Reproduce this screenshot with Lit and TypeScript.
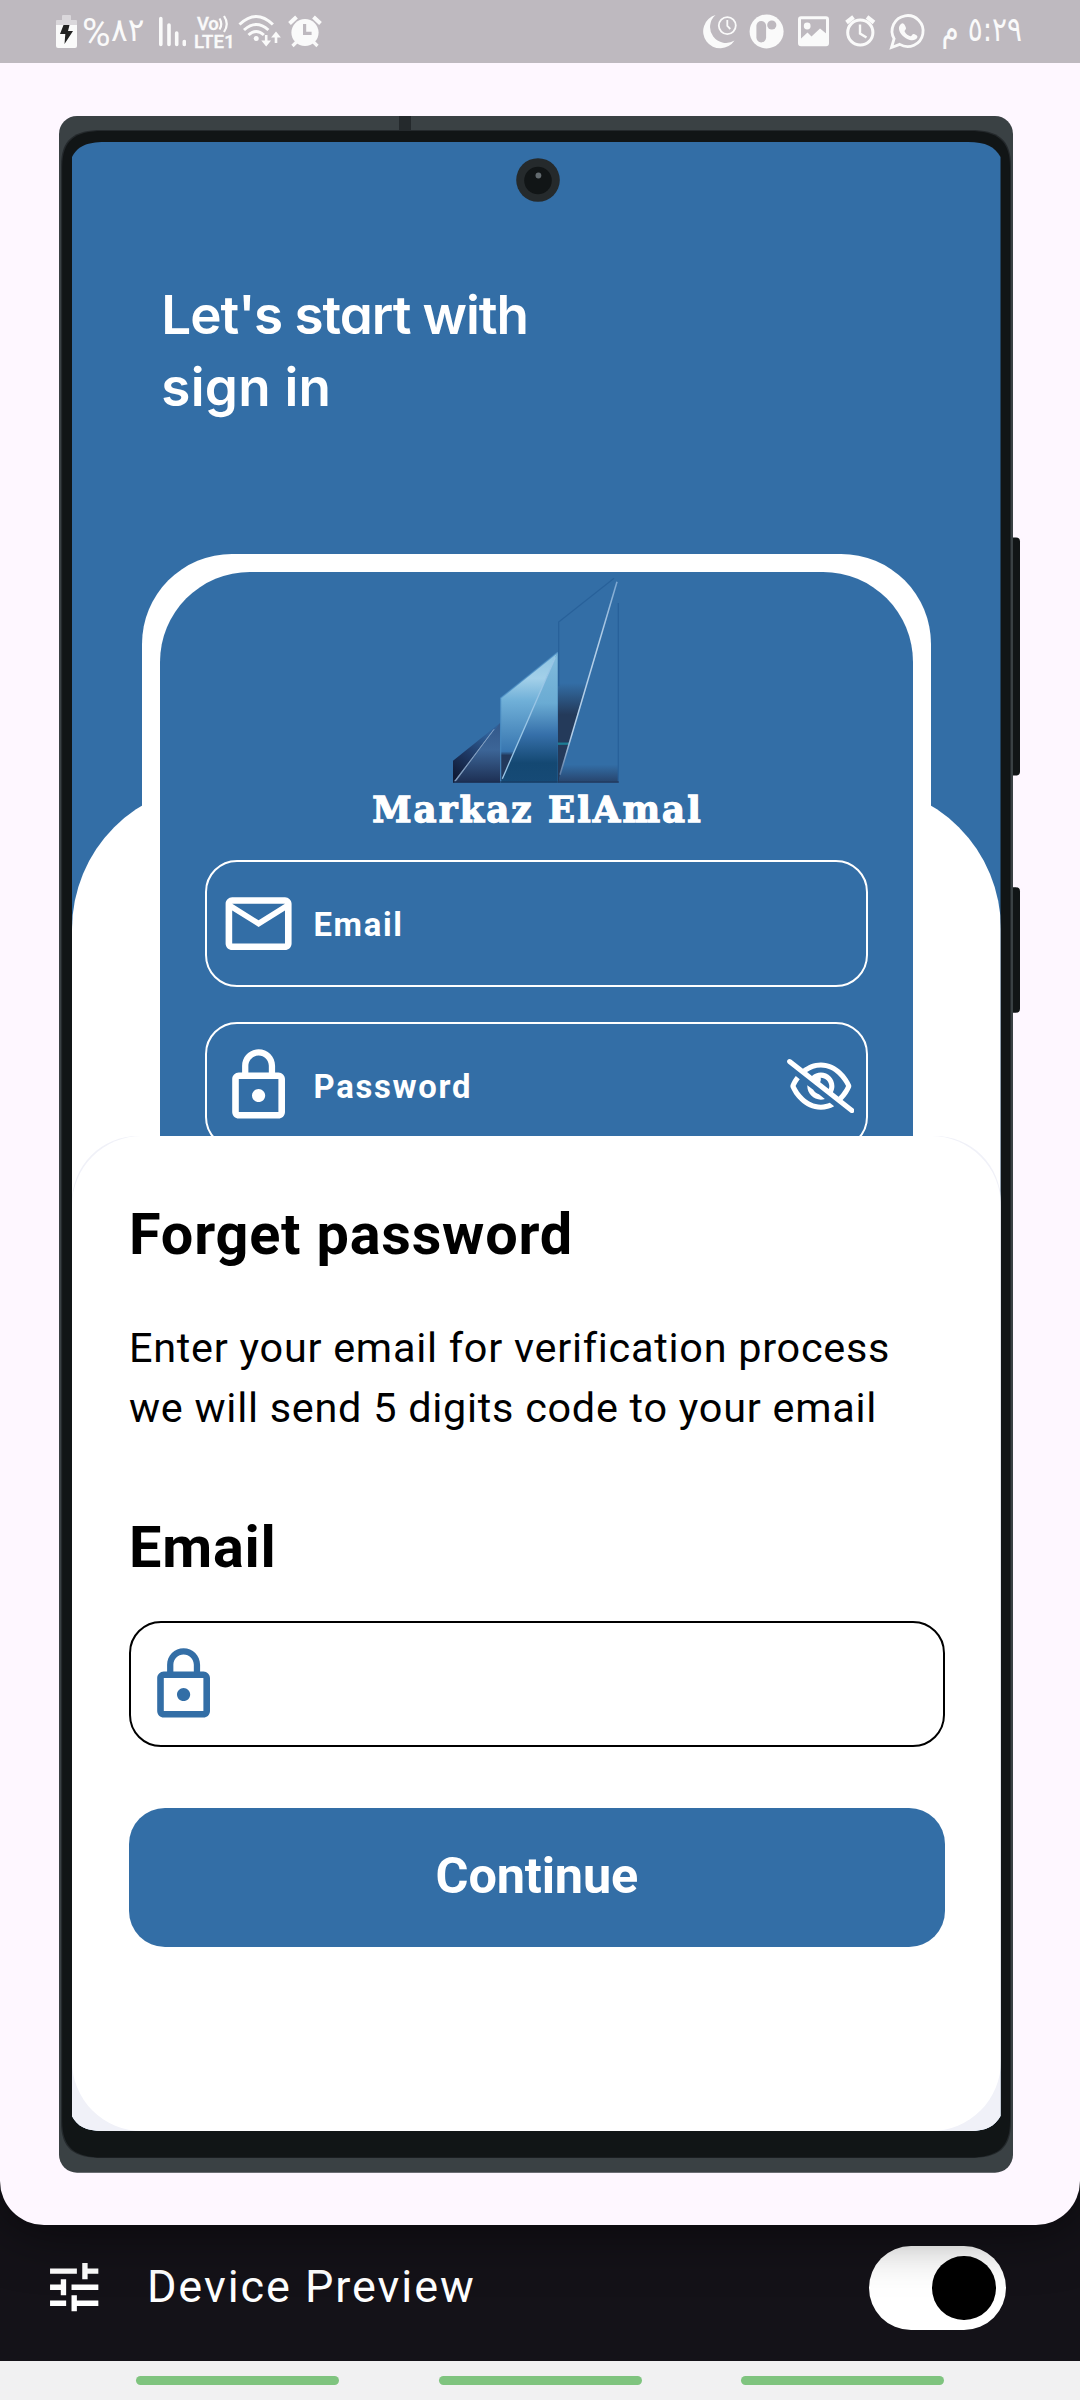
import { LitElement, html, css, svg } from "lit";
import { customElement, property } from "lit/decorators.js";

const LOCK =
  "M12 17c1.1 0 2-.9 2-2s-.9-2-2-2-2 .9-2 2 .9 2 2 2zm6-9h-1V6c0-2.76-2.24-5-5-5S7 3.24 7 6v2H6c-1.1 0-2 .9-2 2v10c0 1.1.9 2 2 2h12c1.1 0 2-.9 2-2V10c0-1.1-.9-2-2-2zM8.9 6c0-1.71 1.39-3.1 3.1-3.1s3.1 1.39 3.1 3.1v2H8.9V6zM18 20H6V10h12v10z";
const MAIL =
  "M22 6c0-1.1-.9-2-2-2H4c-1.1 0-2 .9-2 2v12c0 1.1.9 2 2 2h16c1.1 0 2-.9 2-2V6zm-2 0l-8 5-8-5h16zm0 12H4V8l8 5 8-5v10z";
const TUNE =
  "M3 17v2h6v-2H3zM3 5v2h10V5H3zm10 16v-2h8v-2h-8v-2h-2v6h2zM7 9v2H3v2h4v2h2V9H7zm14 4v-2H11v2h10zm-6-4h2V7h4V5h-4V3h-2v6z";
const EYE_OFF =
  "M38.8 5.1C28.4-3.1 13.3-1.2 5.1 9.2S-1.2 34.7 9.2 42.9l592 464c10.4 8.2 25.5 6.3 33.7-4.1s6.3-25.5-4.1-33.7L525.6 386.7c39.6-40.6 66.4-86.1 79.9-118.4c3.3-7.9 3.3-16.7 0-24.6c-14.9-35.7-46.2-87.7-93-131.1C465.5 68.8 400.8 32 320 32c-68.2 0-125 26.3-169.3 60.8L38.8 5.1zm151 118.3C226 97.7 269.5 80 320 80c65.2 0 118.8 29.6 159.9 67.7C518.4 183.5 545 226 558.6 256c-12.6 28-36.6 66.8-70.9 100.9l-53.8-42.2c9.1-17.6 14.2-37.5 14.2-58.7c0-70.7-57.3-128-128-128c-32.2 0-61.7 11.9-84.2 31.5l-46.1-36.1zM394.9 284.2l-81.5-63.9c4.2-8.5 6.6-18.2 6.6-28.3c0-5.5-.7-10.9-2-16c.7 0 1.3 0 2 0c44.2 0 80 35.8 80 80c0 9.9-1.8 19.4-5.1 28.2zm9.4 130.3C378.8 425.4 350.7 432 320 432c-65.2 0-118.8-29.6-159.9-67.7C121.6 328.5 95 286 81.4 256c8.3-18.4 21.5-41.5 39.4-64.8L83.1 161.5C60.3 191.2 44 220.8 34.5 243.7c-3.3 7.9-3.3 16.7 0 24.6c14.9 35.7 46.2 87.7 93 131.1C174.5 443.2 239.2 480 320 480c47.8 0 89.9-12.9 126.2-32.5l-41.9-33zM192 256c0 70.7 57.3 128 128 128c13.3 0 26.1-2 38.2-5.8L302 334c-23.5-5.4-43.1-21.2-53.7-42.3l-56.1-44.2c-.2 2.8-.3 5.6-.3 8.5z";

@customElement("glyph-icon")
export class GlyphIcon extends LitElement {
  @property() path = "";
  @property() box = "0 0 24 24";
  static styles = css`
    :host { display: block; flex: none; }
    svg { display: block; width: 100%; height: 100%; fill: currentColor; }
  `;
  render() {
    return html`<svg viewBox=${this.box}><path d=${this.path}></path></svg>`;
  }
}

@customElement("status-bar")
export class StatusBar extends LitElement {
  static styles = css`
    :host { display: flex; justify-content: space-between; height: 63px; background: #beb9bf; color: #fafafa; }
    .side { display: flex; height: 63px; }
    .left { padding-left: 56px; }
    .right { padding-right: 58px; }
    svg { display: block; height: 63px; flex: none; }
    .battery { width: 21px; }
    .signal { width: 28px; margin-left: 13px; }
    .percent { width: 63px; margin-left: 5px; font: 32px/63px "DejaVu Sans", sans-serif; display: flex; direction: ltr; }
    .sign { font: 39px/67px "Roboto", sans-serif; width: 29px; }
    .digits { display: block; transform: scaleX(0.97); transform-origin: 0 50%; line-height: 60px; }
    .volte { margin-left: 8px; width: 39px; padding-top: 15px; font: 500 18.5px/18px "Roboto", sans-serif; display: flex; flex-direction: column; -webkit-text-stroke: 0.4px #fafafa; }
    .vo { display: flex; padding-left: 3px; height: 18px; letter-spacing: -0.3px; }
    .vo svg { width: 12px; height: 18px; }
    .lte { letter-spacing: 0.3px; }
    .wifi { width: 43px; margin-left: 5px; }
    .alarm { width: 34px; margin-left: 7px; }
    .apps { width: 224px; }
    .time { margin-left: 12px; direction: rtl; font: 34px/58px "DejaVu Sans", sans-serif; white-space: nowrap; width: 84px; transform: scaleX(0.82); transform-origin: 100% 50%; }
  `;
  render() {
    return html`
      <div class="side left">
        <svg class="battery" viewBox="56 0 21 63">
          <path fill="#dad7db" d="M62 16q0-1 1-1h7q1 0 1 1v4h5q1 0 1 1v5H56v-5q0-1 1-1h5z" />
          <path fill="#fafafa" d="M56 25h21v21q0 2-2 2H58q-2 0-2-2z" />
          <path fill="#222" d="M63.500 25h6l-1.500 6h5l-8.500 13 .8-10H60z" />
        </svg>
        <div class="percent"><span class="sign">%</span><span class="digits">٨٢</span></div>
        <svg class="signal" viewBox="157 0 28 63" fill="none" stroke="#fafafa" stroke-width="3.600" stroke-linecap="round">
          <path d="M159.800 18.500V44.500M168 25V44.500M175.700 33V44.500M183.300 41.500V44.500" />
        </svg>
        <div class="volte">
          <span class="vo">Vo<svg viewBox="0 0 12 18" fill="none" stroke="#fafafa" stroke-width="2.200"><path d="M1.500 3.500q3.500 5.500 0 11M6 1q5.500 8 0 16" /></svg></span>
          <span class="lte">LTE1</span>
        </div>
        <svg class="wifi" viewBox="237 0 43 63" fill="none" stroke="#fafafa" stroke-width="3">
          <path d="M238.500 24.500q16.700-16 33.400 0M243 30q12.200-11 24.400 0M247.500 35q7.700-7 15.400 0" />
          <circle cx="255.200" cy="38.500" r="2.500" fill="#fafafa" stroke="none" />
          <path stroke-width="2.600" d="M265.200 35v8M275 43v-8" />
          <path fill="#fafafa" stroke="none" d="M260.300 40.500h9.800l-4.900 6zM270.100 37.500h9.800l-4.900-6z" />
        </svg>
        <svg class="alarm" viewBox="288 0 34 63">
          <circle cx="305" cy="32.500" r="13.600" fill="#fafafa" />
          <path d="M289.500 23.500l7-6.500M320.500 23.500l-7-6.500" stroke="#fafafa" stroke-width="4" />
          <path d="M292.500 46l4.500-4.500M317.500 46l-4.500-4.500" stroke="#fafafa" stroke-width="3.200" />
          <path d="M304.600 24v9.300h7" fill="none" stroke="#beb9bf" stroke-width="3.200" />
        </svg>
      </div>
      <div class="side right">
        <svg class="apps" viewBox="702 0 224 63">
          <g fill="#fafafa">
            <path d="M715.500 15A17 17 0 1 0 734.500 40.500A15.950 15.950 0 0 1 715.500 15z" />
            <circle cx="727.300" cy="25.600" r="8.500" fill="none" stroke="#fafafa" stroke-width="1.800" />
            <path d="M727.300 20v6l3 3" fill="none" stroke="#fafafa" stroke-width="1.800" />
            <circle cx="766.600" cy="31.400" r="17" />
            <rect x="756.400" y="21" width="9.700" height="21.400" rx="4.800" fill="#beb9bf" />
            <circle cx="771.800" cy="25" r="4.600" fill="#beb9bf" />
            <rect x="799.500" y="17.700" width="28" height="27" rx="1.500" fill="none" stroke="#fafafa" stroke-width="3" />
            <circle cx="807.200" cy="26" r="3.400" />
            <path d="M800 39.500l7.500-7 4 4 8.500-8 8 6.500v9.500h-28z" />
            <circle cx="860.300" cy="32.500" r="12.600" fill="none" stroke="#fafafa" stroke-width="3" />
            <path d="M846.500 22.500l7-5.500M874 22.500l-7-5.500" stroke="#fafafa" stroke-width="4.200" />
            <path d="M860 24.500v9l6.500 4" fill="none" stroke="#fafafa" stroke-width="2.400" />
            <path d="M891.500 47.500l2.600-8.800a15.500 15.500 0 1 1 5.600 5.700z" fill="none" stroke="#fafafa" stroke-width="2.800" />
            <path d="M901 24c2.500-2 4 1 5 4 .4 1.500-2 2.500-1.300 3.700 1.600 2.600 3.300 3.800 5.600 4.500 1.200.3 2-2.700 3.700-2.200 2.400.9 4 1.800 3.300 3.600-1.200 2.600-4.500 3.300-7.500 2.400-5.500-1.800-10-6-10.800-10.700-.4-2.200.6-4.200 2-5.300z" />
          </g>
        </svg>
        <span class="time">٥:٢٩ م</span>
      </div>
    `;
  }
}

@customElement("brand-logo")
export class BrandLogo extends LitElement {
  static styles = css`
    :host { display: flex; flex-direction: column; align-items: center; }
    svg { display: block; width: 166px; height: 204.7px; margin-right: 1px; }
    .name { margin-top: 7px; padding-left: 2px; font: bold 35.5px/40px "DejaVu Serif", serif; letter-spacing: 2.1px; color: #fff; white-space: nowrap; -webkit-text-stroke: 1.3px #fff; }
  `;
  render() {
    return html`
      <svg viewBox="339 55 498 614">
        <defs>
          <linearGradient id="a" gradientUnits="userSpaceOnUse" x1="345" y1="650" x2="440" y2="520"><stop offset="0" stop-color="#101b36" /><stop offset=".5" stop-color="#1f3a66" /><stop offset="1" stop-color="#30619a" /></linearGradient>
          <linearGradient id="b" gradientUnits="userSpaceOnUse" x1="0" y1="490" x2="0" y2="669"><stop offset="0" stop-color="#33588a" /><stop offset=".45" stop-color="#3c6597" /><stop offset="1" stop-color="#1d2f53" /></linearGradient>
          <linearGradient id="c" gradientUnits="userSpaceOnUse" x1="0" y1="278" x2="0" y2="669"><stop offset="0" stop-color="#8cc3e2" /><stop offset=".2" stop-color="#a3d0e9" /><stop offset=".37" stop-color="#70b0d8" /><stop offset=".76" stop-color="#3876b0" /><stop offset=".79" stop-color="#22395c" /><stop offset="1" stop-color="#22395c" /></linearGradient>
          <linearGradient id="d" gradientUnits="userSpaceOnUse" x1="0" y1="278" x2="0" y2="669"><stop offset="0" stop-color="#82bcdd" /><stop offset=".39" stop-color="#6aabd3" /><stop offset=".63" stop-color="#3670aa" /><stop offset=".85" stop-color="#144872" /><stop offset="1" stop-color="#164a76" /></linearGradient>
          <linearGradient id="e" gradientUnits="userSpaceOnUse" x1="0" y1="370" x2="0" y2="465"><stop offset="0" stop-color="#243a5a" stop-opacity="0" /><stop offset="1" stop-color="#243a5a" /></linearGradient>
          <linearGradient id="f" gradientUnits="userSpaceOnUse" x1="0" y1="615" x2="0" y2="669"><stop offset="0" stop-color="#27436b" stop-opacity="0" /><stop offset="1" stop-color="#27436b" /></linearGradient>
          <linearGradient id="g" gradientUnits="userSpaceOnUse" x1="832" y1="62" x2="660" y2="645"><stop offset="0" stop-color="#7ba6d0" /><stop offset=".3" stop-color="#b4cfe8" /><stop offset=".8" stop-color="#b4cfe8" /><stop offset="1" stop-color="#5c7ba3" /></linearGradient>
        </defs>
        <path fill="url(#a)" d="M339 603L480 490L342 669H339z" />
        <path fill="url(#b)" d="M480 490V669H340z" />
        <path fill="#8ba6c6" d="M344 664L462 509L348 663z" stroke="#8ba6c6" stroke-width="2" />
        <path fill="url(#c)" d="M482 415L653 278L482 669z" />
        <path fill="url(#d)" d="M653 278V669H482z" />
        <path d="M482 665V415L653 278" fill="none" stroke="#4c8fc4" stroke-width="4" opacity=".7" />
        <path d="M487 657L646 293" stroke="#9ac6e6" stroke-width="4" />
        <path fill="url(#e)" d="M654 370H740L660 645L656 669H654z" />
        <path fill="url(#f)" d="M668 615H836V669H655z" />
        <path d="M656 380V187L822 56M835 130V665" fill="none" stroke="#28619a" stroke-width="4" />
        <path d="M654 552H687" stroke="#1d7c93" stroke-width="7" />
        <path d="M831 66L660 645" stroke="url(#g)" stroke-width="4.500" />
        <path d="M339 667H836" stroke="#1b2c4c" stroke-width="3" opacity=".6" />
      </svg>
      <div class="name">Markaz ElAmal</div>
    `;
  }
}

@customElement("login-page")
export class LoginPage extends LitElement {
  static styles = css`
    :host { display: block; height: 1989px; position: relative; background: #336ea6; color: #fff; overflow: hidden; }
    .backdrop { position: absolute; left: 0; right: 0; top: 643px; bottom: 0; background: #fff; border-radius: 144px 144px 0 0; }
    .page { position: relative; padding: 138px 69.8px 0; }
    .title { margin: 0 0 130.4px 19.5px; font: 600 53px/71.7px "Inter", "Lato", sans-serif; font-feature-settings: "cv11"; letter-spacing: -1.05px; }
    .wide { letter-spacing: 0.25px; }
    .frame { padding: 18.3px 18px 0; background: #fff; border-radius: 90px 90px 0 0; }
    .card { height: 700px; padding: 6px 44.800px 0 45.300px; background: #336ea6; border-radius: 90px 90px 0 0; }
    .fields { display: flex; flex-direction: column; gap: 35.6px; margin-top: 30.4px; }
    .field { box-sizing: border-box; display: flex; align-items: center; height: 126.7px; padding: 0 11.5px 0 12.4px; border: 2px solid #fff; border-radius: 32px; }
    .icon { width: 79.2px; height: 79.2px; }
    .label { flex: 1; margin: 2.6px 0 0 14.8px; font: bold 32.8px/40px "Roboto", sans-serif; letter-spacing: 1.7px; }
    .eye { width: 67.7px; height: 54.2px; }
  `;
  render() {
    return html`
      <div class="backdrop"></div>
      <div class="page">
        <h1 class="title">Let's start with<br /><span class="wide">sign in</span></h1>
        <div class="frame">
          <div class="card">
            <brand-logo></brand-logo>
            <div class="fields">
              <div class="field">
                <glyph-icon class="icon" .path=${MAIL}></glyph-icon>
                <span class="label">Email</span>
              </div>
              <div class="field">
                <glyph-icon class="icon" .path=${LOCK}></glyph-icon>
                <span class="label">Password</span>
                <glyph-icon class="eye" .path=${EYE_OFF} box="0 0 640 512"></glyph-icon>
              </div>
            </div>
          </div>
        </div>
      </div>
    `;
  }
}

@customElement("reset-sheet")
export class ResetSheet extends LitElement {
  static styles = css`
    :host { display: block; height: 994.7px; background: #f0f1f8; border-radius: 66px 66px 0 0; color: #000; font-family: "Roboto", sans-serif; }
    .body { box-sizing: border-box; height: 100%; padding: 64.3px 55.8px 0 57px; background: #fff; border-radius: 70px; }
    .heading { margin: 0; font-size: 57.6px; line-height: 68px; font-weight: bold; letter-spacing: 0.8px; }
    .copy { margin: 48.9px 0 75.4px; font-size: 41.4px; line-height: 60.7px; letter-spacing: 0.73px; white-space: nowrap; }
    .input { box-sizing: border-box; display: flex; align-items: center; margin-top: 38.7px; height: 126px; padding: 1.5px 0 0 12.5px; border: 2px solid #000; border-radius: 32px; color: #336ea6; }
    .icon { width: 79.2px; height: 79.2px; }
    .button { display: flex; align-items: center; justify-content: center; margin-top: 61px; height: 139.3px; border-radius: 36px; background: #336ea6; color: #fff; font-size: 50.4px; line-height: 60px; font-weight: bold; letter-spacing: -0.15px; }
    .caption { margin-top: -3px; }
  `;
  render() {
    return html`
      <div class="body">
        <h2 class="heading">Forget password</h2>
        <p class="copy">Enter your email for verification process<br />we will send 5 digits code to your email</p>
        <h2 class="heading">Email</h2>
        <div class="input"><glyph-icon class="icon" .path=${LOCK}></glyph-icon></div>
        <div class="button"><span class="caption">Continue</span></div>
      </div>
    `;
  }
}

const FRAME = svg`
  <rect x="948" y="421.500" width="13" height="238" rx="4" fill="#111516" />
  <rect x="948" y="771.300" width="13" height="125.400" rx="4" fill="#111516" />
  <rect width="954" height="2056.700" rx="18" fill="#3a4144" />
  <rect x="340" y="0" width="12" height="16" fill="#24292c" />
  <path fill="#24292c" d="M2 50C2 23 15 14 43 14H911C939 14 952 23 952 50V2006C952 2033 939 2042 911 2042H43C15 2042 2 2033 2 2006z" />
  <path fill="#111516" d="M3.200 51C3.200 24 16 15 44 15H910C938 15 951 24 951 51V2005C951 2032 938 2041.500 910 2041.500H44C16 2041.500 3.200 2032 3.200 2005z" />
`;

@customElement("app-root")
export class AppRoot extends LitElement {
  static styles = css`
    :host { display: flex; flex-direction: column; width: 1080px; height: 2400px; overflow: hidden; background: #141218; }
    .pane { position: relative; z-index: 1; box-sizing: border-box; height: 2161.700px; padding: 53px 67px 0 59px; background: #fef7ff; border-radius: 0 0 44px 44px; box-shadow: 0 0 60px rgba(0, 0, 0, 0.66); flex: none; }
    .device { position: relative; box-sizing: border-box; width: 954px; height: 2056.700px; padding: 26px 12.5px 0 13px; }
    .shell { position: absolute; left: 0; top: 0; width: 954px; height: 2056.700px; overflow: visible; }
    .screen { position: relative; height: 1989px; clip-path: path("M0 15C5 5 14 0 33 0H896C914 0 923 5 928.5 15V1974C923 1984 914 1989 898 1989H31C14 1989 5 1984 0 1974z"); }
    .sheet { position: absolute; left: 0; right: 0; bottom: 0; }
    .camera { position: absolute; left: 444px; top: 16px; width: 44px; height: 44px; }
    .toolbar { flex: none; display: flex; align-items: center; box-sizing: border-box; height: 136.300px; padding: 0 74px 0 41.5px; color: #fff; }
    .tune { width: 64.4px; height: 64.4px; margin-top: -10.500px; }
    .caption { flex: 1; margin: -11px 0 0 41px; font: 45px/56px "Roboto", sans-serif; letter-spacing: 1.95px; }
    .switch { box-sizing: border-box; width: 137px; height: 84px; margin-top: -10px; padding: 10.3px; display: flex; justify-content: flex-end; border-radius: 42px; background: #fff; }
    .knob { width: 63.4px; height: 63.4px; border-radius: 50%; background: #000; }
    .nav { flex: none; display: flex; justify-content: center; gap: 99.5px; height: 39px; padding-top: 15px; box-sizing: border-box; background: #f1f1f2; }
    .pill { width: 203px; height: 9px; border-radius: 5px; background: #7fc47f; }
    status-bar { flex: none; position: relative; z-index: 2; }
  `;
  render() {
    return html`
      <status-bar></status-bar>
      <div class="pane">
        <div class="device">
          <svg class="shell" viewBox="0 0 954 2056.700">${FRAME}</svg>
          <div class="screen">
            <login-page></login-page>
            <reset-sheet class="sheet"></reset-sheet>
            <svg class="camera" viewBox="0 0 44 44">
              <circle cx="22" cy="22" r="21.800" fill="#252a2c" />
              <circle cx="22" cy="22.500" r="13.800" fill="#111516" />
              <circle cx="22.400" cy="17.500" r="2.900" fill="#636b6f" />
            </svg>
          </div>
        </div>
      </div>
      <div class="toolbar">
        <glyph-icon class="tune" .path=${TUNE}></glyph-icon>
        <span class="caption">Device Preview</span>
        <div class="switch"><div class="knob"></div></div>
      </div>
      <div class="nav"><div class="pill"></div><div class="pill"></div><div class="pill"></div></div>
    `;
  }
}
